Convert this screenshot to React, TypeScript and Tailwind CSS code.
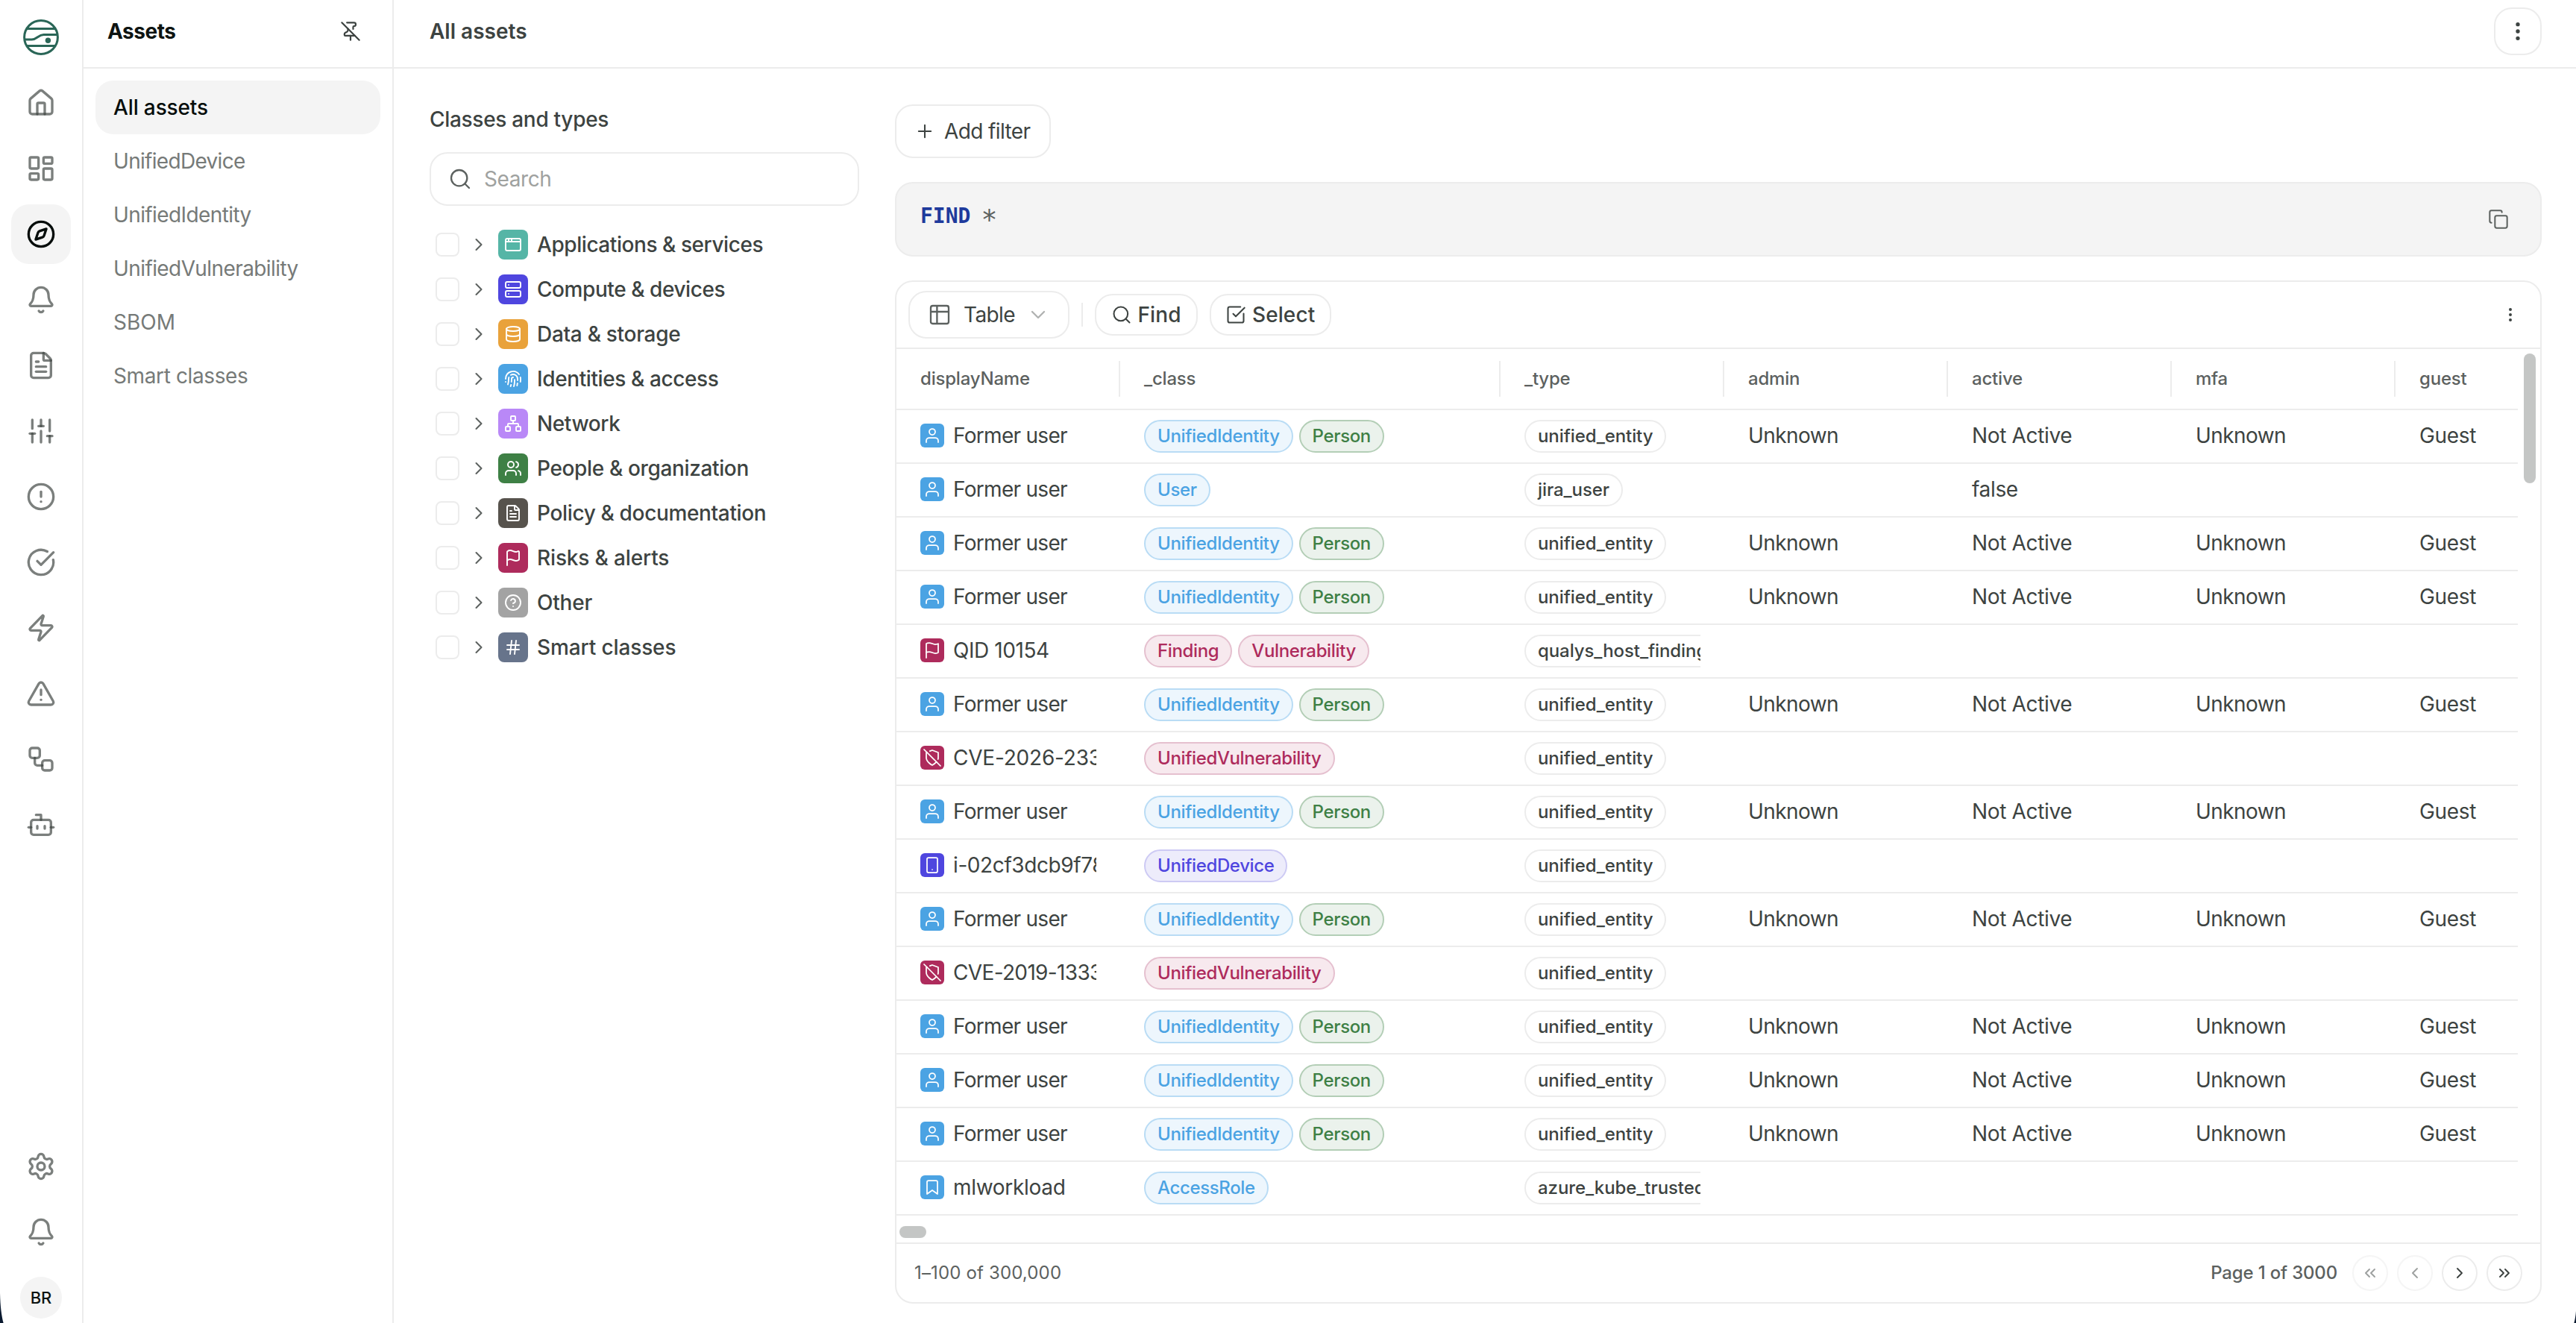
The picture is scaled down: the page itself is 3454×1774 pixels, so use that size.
import { type ComponentType, type ReactNode, useState } from "react";
import { clsx } from "clsx";
import {
  AppWindow,
  Bell,
  Bot,
  ChevronDown,
  ChevronLeft,
  ChevronRight,
  ChevronsLeft,
  ChevronsRight,
  CircleAlert,
  CircleCheckBig,
  CircleQuestionMark,
  Compass,
  Copy,
  Database,
  EllipsisVertical,
  FileText,
  Fingerprint,
  Flag,
  Hash,
  House,
  LayoutDashboard,
  Network,
  PinOff,
  Plus,
  Search,
  Server,
  Settings,
  SlidersVertical,
  SquareCheckBig,
  TriangleAlert,
  Users,
  Workflow,
  Zap,
} from "lucide-react";
import { FiBookmark, FiFlag, FiShieldOff, FiSmartphone, FiUser } from "react-icons/fi";

type IconType = ComponentType<{ className?: string; strokeWidth?: number }>;

const railItems: { label: string; icon: IconType }[] = [
  { label: "Home", icon: House },
  { label: "Dashboards", icon: LayoutDashboard },
  { label: "Assets", icon: Compass },
  { label: "Alerts", icon: Bell },
  { label: "Policies", icon: FileText },
  { label: "Controls", icon: SlidersVertical },
  { label: "Issues", icon: CircleAlert },
  { label: "Compliance", icon: CircleCheckBig },
  { label: "Automations", icon: Zap },
  { label: "Threats", icon: TriangleAlert },
  { label: "Workflows", icon: Workflow },
  { label: "Assistant", icon: Bot },
];

const navItems = [
  { label: "All assets", tracking: "tracking-[-0.14px]" },
  { label: "UnifiedDevice", tracking: "tracking-[-0.69px]" },
  { label: "UnifiedIdentity", tracking: "tracking-[-0.6px]" },
  { label: "UnifiedVulnerability", tracking: "tracking-[-0.59px]" },
  { label: "SBOM", tracking: "tracking-normal" },
  { label: "Smart classes", tracking: "tracking-[-0.38px]" },
];

const classGroups: { label: string; icon: IconType; color: string; tracking: string }[] = [
  { label: "Applications & services", icon: AppWindow, color: "bg-[#55b5a6]", tracking: "tracking-[-0.44px]" },
  { label: "Compute & devices", icon: Server, color: "bg-[#4f46df]", tracking: "tracking-[-0.43px]" },
  { label: "Data & storage", icon: Database, color: "bg-[#e9a23b]", tracking: "tracking-[-0.3px]" },
  { label: "Identities & access", icon: Fingerprint, color: "bg-[#4ba3e3]", tracking: "tracking-[-0.4px]" },
  { label: "Network", icon: Network, color: "bg-[#b988f7]", tracking: "tracking-[-0.4px]" },
  { label: "People & organization", icon: Users, color: "bg-[#3e8045]", tracking: "tracking-[-0.36px]" },
  { label: "Policy & documentation", icon: FileText, color: "bg-[#57534d]", tracking: "tracking-[-0.35px]" },
  { label: "Risks & alerts", icon: Flag, color: "bg-[#ae2b5c]", tracking: "tracking-[-0.15px]" },
  { label: "Other", icon: CircleQuestionMark, color: "bg-[#a3a3a3]", tracking: "tracking-[-0.2px]" },
  { label: "Smart classes", icon: Hash, color: "bg-[#67748b]", tracking: "tracking-[-0.12px]" },
];

const columns = [
  { key: "displayName", width: "w-[300px]" },
  { key: "_class", width: "w-[510px]" },
  { key: "_type", width: "w-[300px]" },
  { key: "admin", width: "w-[300px]" },
  { key: "active", width: "w-[300px]" },
  { key: "mfa", width: "w-[300px]" },
  { key: "guest", width: "w-[300px]" },
];

type Tone = "blue" | "green" | "crimson" | "indigo" | "plain";

const pillTones: Record<Tone, string> = {
  blue: "border-[#b9dcf5] bg-[#edf6fd] text-[#4ba3e3]",
  green: "border-[#b3ceb6] bg-[#ebf2ec] text-[#3e8045]",
  crimson: "border-[#e5c0cf] bg-[#f7e9ee] text-[#ae2b5c]",
  indigo: "border-[#cdcaf4] bg-[#edecfb] text-[#4f46df]",
  plain: "border-[#ececec] bg-white text-[#3d4341]",
};

const tileKinds: Record<string, { icon: IconType; color: string }> = {
  user: { icon: FiUser, color: "bg-[#4ba3e3]" },
  finding: { icon: FiFlag, color: "bg-[#ae2b5c]" },
  vulnerability: { icon: FiShieldOff, color: "bg-[#ae2b5c]" },
  device: { icon: FiSmartphone, color: "bg-[#4f46df]" },
  role: { icon: FiBookmark, color: "bg-[#4ba3e3]" },
};

interface AssetRow {
  kind: string;
  name: string;
  tracking?: string;
  classes: [string, Tone][];
  type: string;
  values?: string[];
}

const unifiedUser: AssetRow = {
  kind: "user",
  name: "Former user",
  classes: [
    ["UnifiedIdentity", "blue"],
    ["Person", "green"],
  ],
  type: "unified_entity",
  values: ["Unknown", "Not Active", "Unknown", "Guest"],
};

const rows: AssetRow[] = [
  unifiedUser,
  {
    kind: "user",
    name: "Former user",
    classes: [["User", "blue"]],
    type: "jira_user",
    values: ["", "false", "", ""],
  },
  unifiedUser,
  unifiedUser,
  {
    kind: "finding",
    name: "QID 10154",
    tracking: "tracking-[-0.43px]",
    classes: [
      ["Finding", "crimson"],
      ["Vulnerability", "crimson"],
    ],
    type: "qualys_host_finding",
  },
  unifiedUser,
  {
    kind: "vulnerability",
    name: "CVE-2026-23310",
    tracking: "tracking-[-0.2px]",
    classes: [["UnifiedVulnerability", "crimson"]],
    type: "unified_entity",
  },
  unifiedUser,
  {
    kind: "device",
    name: "i-02cf3dcb9f78a1",
    tracking: "tracking-[-0.4px]",
    classes: [["UnifiedDevice", "indigo"]],
    type: "unified_entity",
  },
  unifiedUser,
  {
    kind: "vulnerability",
    name: "CVE-2019-13335",
    tracking: "tracking-[-0.65px]",
    classes: [["UnifiedVulnerability", "crimson"]],
    type: "unified_entity",
  },
  unifiedUser,
  unifiedUser,
  unifiedUser,
  {
    kind: "role",
    name: "mlworkload",
    tracking: "tracking-[-0.3px]",
    classes: [["AccessRole", "blue"]],
    type: "azure_kube_trusted_role",
  },
];

export default function App() {
  return (
    <div className="relative flex h-screen w-screen overflow-hidden bg-white font-['Inter',sans-serif] text-[28px] leading-[40px] text-[#3d4341]">
      <Rail />
      <Sidebar />
      <main className="flex min-w-0 flex-1 flex-col">
        <header className="flex h-[92px] shrink-0 items-center justify-between border-b-2 border-[#ececec] pr-[46px] pb-[6px] pl-12">
          <h1 className="font-semibold">All assets</h1>
          <button aria-label="More" className="flex size-16 items-center justify-center rounded-[24px] border-2 border-[#ececec]">
            <EllipsisVertical className="size-8" />
          </button>
        </header>
        <div className="flex min-h-0 flex-1 gap-12 pt-12 pr-[46px] pb-[26px] pl-12">
          <ClassPanel />
          <section className="flex min-w-0 flex-1 flex-col items-start gap-8">
            <button className="flex h-[72px] w-[209px] shrink-0 items-center gap-3 rounded-[24px] border-2 border-[#ececec] pl-6">
              <Plus className="size-7" strokeWidth={1.75} />
              <span className="tracking-[-0.62px] whitespace-nowrap">Add filter</span>
            </button>
            <QueryBar />
            <AssetTable />
          </section>
        </div>
      </main>
      <WindowCorners />
    </div>
  );
}

const Rail = () => {
  const [active, setActive] = useState("Assets");

  return (
    <aside className="flex w-[112px] shrink-0 flex-col items-center border-r-2 border-[#ececec] pt-[26px] pb-[6px]">
      <Logo />
      <nav className="mt-6 flex flex-col gap-2">
        {railItems.map(({ label, icon: Icon }) => (
          <button
            key={label}
            aria-label={label}
            onClick={() => setActive(label)}
            className={clsx(
              "flex size-20 items-center justify-center rounded-[24px]",
              label === active ? "bg-[#f4f4f4] text-[#060d0b]" : "text-[#3c423f]/68",
            )}
          >
            <Icon className="size-10" strokeWidth={2} />
          </button>
        ))}
      </nav>
      <div className="mt-auto flex flex-col items-center gap-2 text-[#3c423f]/68">
        <span className="flex size-20 items-center justify-center">
          <Settings className="size-10" />
        </span>
        <span className="flex size-20 items-center justify-center">
          <Bell className="size-10" />
        </span>
        <span className="mt-3 flex size-14 items-center justify-center rounded-full bg-[#f4f4f4] text-[22px] font-medium text-[#0e1412]">
          BR
        </span>
      </div>
    </aside>
  );
};

const Logo = () => (
  <svg viewBox="0 0 48 48" className="size-12 shrink-0 text-[#2a6657]" fill="none" stroke="currentColor" strokeWidth="3">
    <circle cx="24" cy="24" r="22.4" />
    <path d="M5 12.4h38M5 35.4h38" />
    <path d="M2 27h9.5c7.5 0 8.5-6.4 16-6.4H46" />
    <circle cx="33.4" cy="28.3" r="3.7" fill="currentColor" stroke="none" />
  </svg>
);

const Sidebar = () => {
  const [selected, setSelected] = useState("All assets");

  return (
    <aside className="flex w-[416px] shrink-0 flex-col border-r-2 border-[#ececec]">
      <div className="flex h-[92px] items-center justify-between border-b-2 border-[#ececec] pr-[42px] pb-[6px] pl-8">
        <h2 className="font-bold tracking-[-0.5px] text-[#0e1412]">Assets</h2>
        <PinOff className="size-7" strokeWidth={1.9} />
      </div>
      <nav className="flex flex-col p-4">
        {navItems.map(({ label, tracking }) => (
          <button
            key={label}
            onClick={() => setSelected(label)}
            className={clsx(
              "flex h-[72px] items-center rounded-[24px] px-6 whitespace-nowrap",
              tracking,
              label === selected ? "bg-[#f4f4f4] font-medium text-[#060d0b]" : "text-[#767a78]",
            )}
          >
            {label}
          </button>
        ))}
      </nav>
    </aside>
  );
};

const ClassPanel = () => (
  <section className="w-[576px] shrink-0">
    <h3 className="font-medium tracking-[-0.3px]">Classes and types</h3>
    <label className="mt-6 flex h-[72px] items-center gap-4 rounded-[24px] border-2 border-[#ececec] pl-[23px]">
      <Search className="size-8 shrink-0 text-[#5c615f]" strokeWidth={1.75} />
      <input
        placeholder="Search"
        className="w-full bg-transparent tracking-[-0.4px] outline-none placeholder:text-[#9fa2a0]"
      />
    </label>
    <ul className="mt-[22px]">
      {classGroups.map(({ label, icon: Icon, color, tracking }) => (
        <li key={label} className="flex h-[60px] items-center gap-3 pl-2">
          <span className="size-8 rounded-lg border-2 border-[#ececec]" />
          <ChevronRight className="size-7 text-[#5c615f]" strokeWidth={1.75} />
          <span className={clsx("flex size-10 items-center justify-center rounded-lg text-white", color)}>
            <Icon className="size-6" strokeWidth={1.9} />
          </span>
          <span className={clsx("font-medium whitespace-nowrap", tracking)}>{label}</span>
        </li>
      ))}
    </ul>
  </section>
);

const QueryBar = () => (
  <div className="flex h-[100px] w-full shrink-0 items-center justify-between rounded-[24px] border-2 border-[#ececec] bg-[#f4f4f4] pr-[42px] pl-8">
    <code className="mb-2 font-['DejaVu_Sans_Mono',monospace] text-[28px] whitespace-pre text-[#5c615f]">
      <b className="text-[#1e3a9c]">FIND</b> <span className="inline-block translate-y-[6px] scale-130">*</span>
    </code>
    <Copy className="size-7 text-[#5c615f]" strokeWidth={1.75} />
  </div>
);

const AssetTable = () => (
  <div className="flex min-h-0 w-full flex-1 flex-col overflow-hidden rounded-[24px] border-2 border-[#ececec]">
    <Toolbar />
    <div className="flex min-h-0 flex-1">
      <div className="w-[2174px] overflow-hidden">
        <div className="flex h-[82px] border-b-2 border-[#ececec] text-[24px] font-medium tracking-[-0.2px] text-[#5c615f]">
          {columns.map(({ key, width }) => (
            <div key={key} className={clsx("flex shrink-0 items-center justify-between pl-8", width)}>
              {key}
              <span className="h-12 w-0.5 bg-[#ececec]" />
            </div>
          ))}
        </div>
        {rows.map((row, i) => (
          <TableRow key={i} row={row} />
        ))}
        <div className="mt-[14px] ml-1 h-4 w-9 rounded-lg bg-[#c4c6c5]" />
      </div>
      <div className="mt-1.5 ml-2 h-[174px] w-4 rounded-lg bg-[#c4c6c5]" />
    </div>
    <Pagination />
  </div>
);

const Toolbar = () => (
  <div className="flex h-[90px] shrink-0 items-center gap-4 border-b-2 border-[#ececec] pr-7 pl-4">
    <button className="flex h-16 w-[216px] items-center gap-4 rounded-[24px] border-2 border-[#ececec] pl-6">
      <svg viewBox="0 0 24 24" className="size-8 shrink-0 text-[#5c615f]" fill="none" stroke="currentColor" strokeWidth="1.75">
        <rect x="3" y="3" width="18" height="18" rx="2" />
        <path d="M3 9h18M9.3 3v18" />
      </svg>
      <span className="w-[68px] tracking-[-0.6px]">Table</span>
      <ChevronDown className="size-8 shrink-0 text-[#b0b2b1]" strokeWidth={1.75} />
    </button>
    <span className="h-8 w-0.5 bg-[#ececec]" />
    <ToolbarButton icon={<Search className="size-7" strokeWidth={1.75} />} label="Find" />
    <ToolbarButton icon={<SquareCheckBig className="size-7" strokeWidth={1.75} />} label="Select" />
    <EllipsisVertical className="ml-auto size-6" />
  </div>
);

const ToolbarButton = ({ icon, label }: { icon: ReactNode; label: string }) => (
  <button className="flex h-14 items-center gap-2 rounded-[24px] border-2 border-[#ececec] pr-5 pl-[19.5px] font-medium tracking-[0.08px]">
    {icon}
    {label}
  </button>
);

const TableRow = ({ row }: { row: AssetRow }) => {
  const { icon: Icon, color } = tileKinds[row.kind];

  return (
    <div className="flex h-[72px] border-b-2 border-[#ececec]">
      <div className="w-[300px] shrink-0 px-8">
        <div className="flex h-full items-center gap-3 overflow-hidden pb-0.5">
          <span className={clsx("flex size-8 shrink-0 items-center justify-center rounded-md text-white", color)}>
            <Icon className="size-6" strokeWidth={1.75} />
          </span>
          <span className={clsx("whitespace-nowrap", row.tracking ?? "tracking-[-0.71px]")}>{row.name}</span>
        </div>
      </div>
      <div className="flex w-[510px] shrink-0 items-center gap-2 px-8">
        {row.classes.map(([label, tone]) => (
          <Pill key={label} tone={tone}>
            {label}
          </Pill>
        ))}
      </div>
      <div className="w-[300px] shrink-0 px-8">
        <div className="flex h-full items-center overflow-hidden">
          <Pill tone="plain">{row.type}</Pill>
        </div>
      </div>
      {row.values?.map((value, i) => (
        <div
          key={i}
          className={clsx(
            "flex w-[300px] shrink-0 items-center px-8 pb-0.5",
            value === "Unknown" ? "tracking-[-0.58px]" : "tracking-[-0.35px]",
          )}
        >
          {value}
        </div>
      ))}
    </div>
  );
};

const Pill = ({ tone, children }: { tone: Tone; children: ReactNode }) => (
  <span
    className={clsx(
      "flex h-11 shrink-0 items-center rounded-full border-2 px-4 text-[24px] font-medium whitespace-nowrap",
      tone === "plain" ? "tracking-[-0.08px]" : "tracking-[-0.36px]",
      pillTones[tone],
    )}
  >
    {children}
  </span>
);

const Pagination = () => (
  <div className="flex h-20 shrink-0 items-center gap-3 border-t-2 border-[#ececec] px-6 text-[24px] text-[#5c615f]">
    <span className="mr-auto tracking-[0.15px]">1–100 of 300,000</span>
    <span className="mr-2 font-medium tracking-[-0.17px]">Page 1 of 3000</span>
    <PageButton icon={ChevronsLeft} disabled />
    <PageButton icon={ChevronLeft} disabled />
    <PageButton icon={ChevronRight} />
    <PageButton icon={ChevronsRight} />
  </div>
);

const PageButton = ({ icon: Icon, disabled = false }: { icon: IconType; disabled?: boolean }) => (
  <button
    disabled={disabled}
    className="flex size-12 items-center justify-center rounded-full border-2 border-[#ececec] text-[#3d4341] disabled:opacity-50"
  >
    <Icon className="size-6" strokeWidth={1.9} />
  </button>
);

// Rounded bottom corners of the window, with the desktop showing behind
const WindowCorners = () => (
  <>
    <svg viewBox="0 0 5 40" className="absolute bottom-0 left-0 h-10 w-[5px] text-[#0b1a30]">
      <path d="M0 0C.4 18 2 30 4.6 40H0z" fill="currentColor" />
    </svg>
    <svg viewBox="0 0 3 16" className="absolute right-0 bottom-0 h-4 w-[3px] text-[#0b1a30]">
      <path d="M3 0C2.6 6 1.6 12 .4 16H3z" fill="currentColor" />
    </svg>
  </>
);
